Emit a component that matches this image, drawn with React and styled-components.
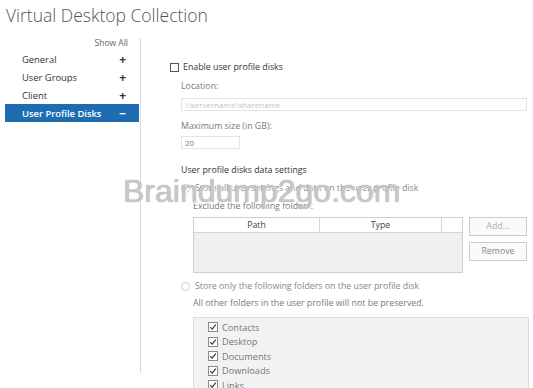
import React from 'react';
import styled, { createGlobalStyle } from 'styled-components';

const GlobalStyle = createGlobalStyle`
  html, body {
    margin: 0;
    padding: 0;
    background: #ffffff;
  }
  body {
    font-family: "Open Sans", "Noto Sans", sans-serif;
    color: #333;
  }
`;

const navItems = [
  { label: 'General' },
  { label: 'User Groups' },
  { label: 'Client' },
  { label: 'User Profile Disks', active: true },
];

const folders = ['Contacts', 'Desktop', 'Documents', 'Downloads', 'Links'];

const App = () => {
  return (
    <>
      <GlobalStyle />
      <Page>
        <Title>Virtual Desktop Collection</Title>
        <Main>
          <Sidebar>
            <ShowAll>Show All</ShowAll>
            {navItems.map((item) => (
              <NavItem key={item.label} $active={item.active}>
                <span>{item.label}</span>
                <Sign>{item.active ? '−' : '+'}</Sign>
              </NavItem>
            ))}
          </Sidebar>

          <Content>
            <CheckRow>
              <CheckBox />
              <span>Enable user profile disks</span>
            </CheckRow>

            <Indent $left={11}>
              <Label $mt={5}>Location:</Label>
              <TextInput $mt={5} $width={346}>\\servername\sharename</TextInput>
              <Label $mt={8}>Maximum size (in GB):</Label>
              <TextInput $mt={3} $width={59} $filled>20</TextInput>

              <Heading $mt={14}>User profile disks data settings</Heading>
              <RadioRow $mt={4}>
                <Radio />
                <span>Store all user settings and data on the user profile disk</span>
              </RadioRow>

              <Indent $left={12}>
                <Label $mt={4}>Exclude the following folders:</Label>
                <TableRow>
                  <Table>
                    <HeadRow>
                      <HeadCell $w={125}>Path</HeadCell>
                      <HeadCell $w={122}>Type</HeadCell>
                      <HeadCell $w={23} />
                    </HeadRow>
                  </Table>
                  <Buttons>
                    <Button $disabled>Add...</Button>
                    <Button>Remove</Button>
                  </Buttons>
                </TableRow>
              </Indent>

              <RadioRow $mt={6}>
                <Radio />
                <span>Store only the following folders on the user profile disk</span>
              </RadioRow>

              <Indent $left={12}>
                <Label $mt={3}>All other folders in the user profile will not be preserved.</Label>
                <FolderList>
                  {folders.map((f) => (
                    <FolderItem key={f}>
                      <SmallCheck>
                        <svg width="8" height="8" viewBox="0 0 8 8">
                          <polyline points="1.2,4.2 3.2,6.2 6.8,1.6" fill="none" stroke="#3a3a3a" strokeWidth="1.2" />
                        </svg>
                      </SmallCheck>
                      <span>{f}</span>
                    </FolderItem>
                  ))}
                </FolderList>
              </Indent>
            </Indent>
          </Content>
        </Main>
        <Watermark>Braindump2go.com</Watermark>
      </Page>
    </>
  );
};

const Page = styled.div`
  position: relative;
  width: 533px;
  height: 388px;
  overflow: hidden;
`;

const Title = styled.div`
  padding: 3px 0 0 6px;
  height: 30px;
  box-sizing: border-box;
  font-size: 17.5px;
  font-weight: 300;
  line-height: 25px;
  color: #555;
`;

const Main = styled.div`
  display: flex;
  margin-top: 8px;
`;

const Sidebar = styled.div`
  width: 141px;
  height: 335px;
  box-sizing: border-box;
  border-right: 1px solid #dadada;
  padding-left: 5px;
`;

const ShowAll = styled.div`
  height: 12px;
  line-height: 10px;
  font-size: 8.5px;
  color: #666;
  text-align: right;
  padding-right: 12px;
`;

const NavItem = styled.div`
  width: 134px;
  height: 18px;
  box-sizing: border-box;
  display: flex;
  align-items: center;
  justify-content: space-between;
  padding: 0 13px 0 17px;
  font-size: 9.4px;
  background: ${(p) => (p.$active ? '#1e6db3' : 'transparent')};
  color: ${(p) => (p.$active ? '#ffffff' : '#333')};
  font-weight: ${(p) => (p.$active ? 600 : 400)};
`;

const Sign = styled.span`
  font-size: 12px;
  font-weight: 700;
`;

const Content = styled.div`
  flex: 1;
  padding: 22px 0 0 29px;
  font-size: 8.8px;
`;

const CheckRow = styled.div`
  display: flex;
  align-items: center;
  height: 14px;
  gap: 4px;
  color: #333;
`;

const CheckBox = styled.span`
  width: 9px;
  height: 9px;
  border: 1px solid #555;
  box-sizing: border-box;
  background: #fff;
`;

const Indent = styled.div`
  padding-left: ${(p) => p.$left}px;
`;

const Label = styled.div`
  height: 14px;
  line-height: 14px;
  margin-top: ${(p) => p.$mt || 0}px;
  color: #7a7a7a;
  white-space: nowrap;
`;

const Heading = styled(Label)`
  color: #333;
`;

const TextInput = styled.div`
  width: ${(p) => p.$width}px;
  height: 13px;
  box-sizing: border-box;
  margin-top: ${(p) => p.$mt || 0}px;
  border: 1px solid #e4e4e4;
  padding-left: 3px;
  font-size: 8px;
  line-height: 11px;
  color: ${(p) => (p.$filled ? '#777' : '#c4c4c4')};
`;

const RadioRow = styled.div`
  display: flex;
  align-items: center;
  gap: 5px;
  height: 14px;
  margin-top: ${(p) => p.$mt || 0}px;
  color: #888;
  white-space: nowrap;
`;

const Radio = styled.span`
  width: 9px;
  height: 9px;
  border-radius: 50%;
  border: 1px solid #c8c8c8;
  box-sizing: border-box;
  flex-shrink: 0;
`;

const TableRow = styled.div`
  display: flex;
  align-items: flex-start;
  margin-top: 4px;
  gap: 6px;
`;

const Table = styled.div`
  width: 270px;
  height: 56px;
  box-sizing: border-box;
  border: 1px solid #cfcfcf;
  background: #f0f0f0;
`;

const HeadRow = styled.div`
  display: flex;
  height: 14px;
  background: #fff;
  border-bottom: 1px solid #d6d6d6;
`;

const HeadCell = styled.div`
  width: ${(p) => p.$w}px;
  box-sizing: border-box;
  text-align: center;
  line-height: 14px;
  font-size: 8.8px;
  color: #444;
  & + & {
    border-left: 1px solid #d6d6d6;
  }
  &:last-child {
    flex: 1;
  }
`;

const Buttons = styled.div`
  display: flex;
  flex-direction: column;
  gap: 6px;
`;

const Button = styled.div`
  width: 58px;
  height: 19px;
  box-sizing: border-box;
  border: 1px solid #cccccc;
  background: #fafafa;
  text-align: center;
  line-height: 17px;
  font-size: 8.8px;
  color: ${(p) => (p.$disabled ? '#b0b0b0' : '#8a8a8a')};
`;

const FolderList = styled.div`
  margin-top: 7px;
  width: 336px;
  height: 90px;
  box-sizing: border-box;
  border: 1px solid #dcdcdc;
  background: #f2f2f2;
  padding: 2px 0 0 14px;
`;

const FolderItem = styled.div`
  display: flex;
  align-items: center;
  gap: 4px;
  height: 14.5px;
  font-size: 9.2px;
  color: #777;
`;

const SmallCheck = styled.span`
  width: 10px;
  height: 10px;
  box-sizing: border-box;
  border: 1px solid #8a8a8a;
  background: #fff;
  display: flex;
  align-items: center;
  justify-content: center;
`;

const Watermark = styled.div`
  position: absolute;
  left: 123px;
  top: 175px;
  font-family: "Liberation Sans", Arial, sans-serif;
  font-size: 32px;
  line-height: 1;
  color: rgba(205, 205, 205, 0.92);
  text-shadow: 0 0 1px #8c8c8c, 1px 1px 0 #fff;
  white-space: nowrap;
  pointer-events: none;
`;

export default App;
